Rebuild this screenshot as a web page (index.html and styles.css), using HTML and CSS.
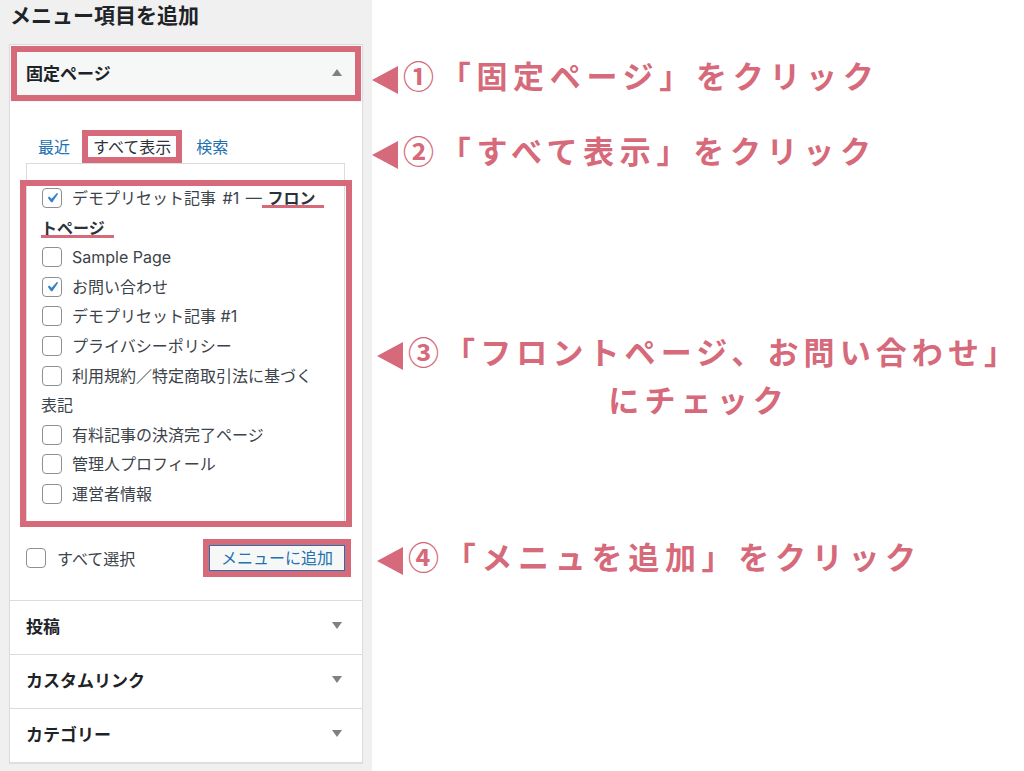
FILE: index.html
```html
<!DOCTYPE html>
<html lang="ja">
<head>
<meta charset="utf-8">
<title>メニュー項目を追加</title>
<link rel="stylesheet" href="styles.css">
</head>
<body>
<div class="page">
  <aside class="sidebar">
    <h2 class="title">メニュー項目を追加</h2>
    <div class="panel">
      <div class="sec-head open"><span>固定ページ</span><span class="arrow up"></span></div>
      <div class="sec-body">
        <ul class="tabs">
          <li class="tab">最近</li>
          <li class="tab active">すべて表示</li>
          <li class="tab last">検索</li>
        </ul>
        <div class="tab-panel">
          <ul class="checklist">
            <li class="front"><span class="cb checked"><svg viewBox="0 0 20 20" width="20" height="20"><path d="M14.83 4.89l1.34.94-5.81 8.38H9.02L5.78 9.67l1.34-1.25 2.57 2.4z"/></svg></span>デモプリセット記事 #1 —<strong class="hl"> フロン</strong><br><strong class="hl">トページ</strong></li>
            <li><span class="cb"></span>Sample Page</li>
            <li><span class="cb checked"><svg viewBox="0 0 20 20" width="20" height="20"><path d="M14.83 4.89l1.34.94-5.81 8.38H9.02L5.78 9.67l1.34-1.25 2.57 2.4z"/></svg></span>お問い合わせ</li>
            <li><span class="cb"></span>デモプリセット記事 #1</li>
            <li><span class="cb"></span>プライバシーポリシー</li>
            <li><span class="cb"></span>利用規約／特定商取引法に基づく表記</li>
            <li><span class="cb"></span>有料記事の決済完了ページ</li>
            <li><span class="cb"></span>管理人プロフィール</li>
            <li><span class="cb"></span>運営者情報</li>
          </ul>
        </div>
        <div class="actions">
          <label class="select-all"><span class="cb"></span>すべて選択</label>
          <button class="add-btn" type="button">メニューに追加</button>
        </div>
      </div>
      <div class="sec-head"><span>投稿</span><span class="arrow down"></span></div>
      <div class="sec-head"><span>カスタムリンク</span><span class="arrow down"></span></div>
      <div class="sec-head"><span>カテゴリー</span><span class="arrow down"></span></div>
    </div>
  </aside>
  <main class="notes">
    <div class="note n1"><span class="tri"></span>①「固定ページ」をクリック</div>
    <div class="note n2"><span class="tri"></span>②「すべて表示」をクリック</div>
    <div class="note n3"><span class="tri"></span>③「フロントページ、お問い合わせ」<br>にチェック</div>
    <div class="note n4"><span class="tri"></span>④「メニュを追加」をクリック</div>
  </main>
</div>
</body>
</html>
```

FILE: styles.css
```css
* { box-sizing: border-box; }
html, body { margin: 0; padding: 0; }
body {
  font-family: Inter, "Noto Sans CJK JP", sans-serif;
  background: #fff;
  color: #3c434a;
}
.page { display: flex; min-height: 771px; }

.sidebar {
  width: 372px;
  flex: none;
  background: #f0f0f1;
  min-height: 771px;
}
.title {
  margin: 0;
  padding: 2px 0 0 10px;
  font-size: 21px;
  line-height: 27px;
  font-weight: 700;
  color: #1d2327;
}
.panel {
  margin: 15px 0 0 9px;
  width: 354px;
  background: #fff;
  border: 1px solid #dcdcde;
  box-shadow: 0 1px 1px rgba(0, 0, 0, 0.06);
}
.sec-head {
  display: flex;
  align-items: center;
  justify-content: space-between;
  height: 54px;
  padding: 0 20px 3px 16px;
  border-top: 1px solid #dcdcde;
  font-size: 17px;
  font-weight: 700;
  color: #1d2327;
}
.sec-head.open {
  height: 57px;
  border-top: 0;
  background: #f6f7f7;
  outline: 6px solid #d6697a;
  outline-offset: -7px;
}
.arrow {
  width: 0;
  height: 0;
  border-left: 5px solid transparent;
  border-right: 5px solid transparent;
}
.arrow.up { border-bottom: 7px solid #7d8186; }
.arrow.down { border-top: 7px solid #7d8186; }

.sec-body { padding: 28px 17px 29px 16px; }
.tabs {
  display: flex;
  align-items: flex-end;
  height: 33px;
  margin: 0;
  padding: 0;
  list-style: none;
  font-size: 16px;
}
.tab {
  padding: 8px 12px 6px;
  line-height: 19px;
  color: #2271b1;
}
.tab.last { padding-left: 14px; }
.tab.active {
  border: 6px solid #d6697a;
  padding: 2px 5px 0;
  color: #2c3338;
  background: #fff;
}
.tab-panel {
  border: 1px solid #dcdcde;
  padding-top: 20px;
}
.checklist {
  list-style: none;
  margin: 0 -4px 0 -3px;
  padding: 0 0 13px 0;
  outline: 6px solid #d6697a;
  outline-offset: -2px;
  font-size: 16px;
  line-height: 29.6px;
}
.checklist li { padding: 0 23px 0 17px; }
.checklist li.front { word-spacing: 2px; }
.cb {
  display: inline-block;
  width: 20px;
  height: 20px;
  border: 1px solid #8c8f94;
  border-radius: 4px;
  background: #fff;
  vertical-align: -4px;
  margin: 0 10px 0 1px;
  position: relative;
}
.cb svg {
  display: block;
  position: absolute;
  left: -1px;
  top: -1px;
  fill: #3582c4;
}
.hl {
  font-weight: 700;
  color: #2c3338;
  padding-right: 9px;
  background: linear-gradient(#d6697a, #d6697a) no-repeat left bottom / 100% 3px;
}

.actions {
  display: flex;
  justify-content: space-between;
  align-items: center;
  margin-top: 21px;
  font-size: 16px;
}
.select-all { display: flex; align-items: center; }
.select-all .cb { margin: 0 11px 0 0; }
.add-btn {
  font: inherit;
  font-size: 16px;
  height: 26px;
  line-height: 24px;
  padding: 0 11px;
  border: 1px solid #2271b1;
  border-radius: 0;
  background: #f6f7f7;
  color: #2271b1;
  outline: 6px solid #d6697a;
  outline-offset: 0;
}

.notes {
  flex: 1;
  min-width: 0;
  display: flex;
  flex-direction: column;
  align-items: flex-start;
  color: #d6697a;
  font-family: "Noto Sans CJK JP", sans-serif;
  font-weight: 700;
  font-size: 31px;
  letter-spacing: 5.7px;
}
.note { line-height: 40px; white-space: nowrap; }
.n1 { margin-top: 55px; }
.n2 { margin-top: 35px; }
.n3 {
  margin-top: 157px;
  line-height: 48px;
  text-align: center;
  padding-left: 5px;
  letter-spacing: 5.1px;
}
.n4 { margin-top: 113px; padding-left: 5px; }
.tri {
  display: inline-block;
  width: 0;
  height: 0;
  border-top: 14px solid transparent;
  border-bottom: 14px solid transparent;
  border-right: 26px solid #d6697a;
  vertical-align: middle;
  margin-right: 5px;
}
```
